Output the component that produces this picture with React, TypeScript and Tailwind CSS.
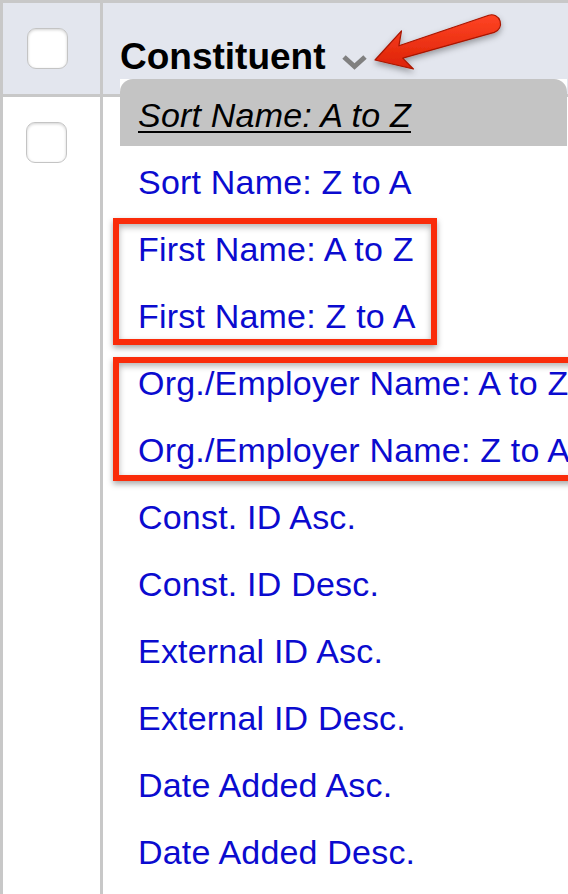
import React from "react";

const items = [
  "Sort Name: Z to A",
  "First Name: A to Z",
  "First Name: Z to A",
  "Org./Employer Name: A to Z",
  "Org./Employer Name: Z to A",
  "Const. ID Asc.",
  "Const. ID Desc.",
  "External ID Asc.",
  "External ID Desc.",
  "Date Added Asc.",
  "Date Added Desc.",
];

function Checkbox() {
  return (
    <div className="w-[41px] h-[41px] rounded-[9px] bg-white border-[1.5px] border-[#c4c4c4] shadow-[inset_0_1px_3px_rgba(0,0,0,0.18)]" />
  );
}

export default function App() {
  return (
    <div
      className="relative w-[568px] h-[894px] overflow-hidden bg-white"
      style={{ fontFamily: '"Liberation Sans", Arial, sans-serif' }}
    >
      <div className="flex flex-col h-full border-t-[3px] border-l-[3px] border-[#c8c8c8]">
        <div className="flex h-[94px] bg-[#e3e6ee] border-b-[3px] border-[#c8c8c8]">
          <div className="w-[100px] border-r-[3px] border-[#c8c8c8] flex items-center pl-[24px]">
            <Checkbox />
          </div>
          <div className="flex-1 flex items-start pl-[17px] pt-[34px]">
            <span className="text-[37px] leading-[40px] font-bold text-black">Constituent</span>
            <svg className="ml-[15px] mt-[17px]" width="27" height="16" viewBox="0 0 27 16">
              <path d="M3 3 L13.5 12.5 L24 3" fill="none" stroke="#808080" strokeWidth="5" strokeLinecap="butt" strokeLinejoin="miter" />
            </svg>
          </div>
        </div>
        <div className="flex flex-1">
          <div className="w-[100px] border-r-[3px] border-[#c8c8c8] pl-[23px] pt-[25px]">
            <Checkbox />
          </div>
          <div className="flex-1" />
        </div>
      </div>

      {/* dropdown menu */}
      <div className="absolute left-[120px] top-[79px] w-[447px] bg-white">
        <div className="h-[67px] bg-[#c4c4c4] rounded-t-[13px] pl-[18px] pt-[3px] leading-[67px] text-[34px] tracking-[0.2px] italic underline decoration-[2px] underline-offset-[4px] text-black whitespace-nowrap">
          Sort Name: A to Z
        </div>
        {items.map((t) => (
          <div
            key={t}
            className="h-[67px] pl-[18px] pt-[3px] leading-[67px] text-[34px] tracking-[0.2px] text-[#0b0bcf] whitespace-nowrap"
          >
            {t}
          </div>
        ))}
      </div>

      {/* annotation boxes */}
      <div className="absolute left-[113px] top-[218px] w-[324px] h-[127px] border-[6px] border-[#fa2c0a] shadow-[0_3px_6px_rgba(0,0,0,0.35),inset_0_3px_6px_rgba(0,0,0,0.3)]" />
      <div className="absolute left-[113px] top-[357px] w-[470px] h-[124px] border-[6px] border-[#fa2c0a] shadow-[0_3px_6px_rgba(0,0,0,0.35),inset_0_3px_6px_rgba(0,0,0,0.3)]" />

      {/* arrow */}
      <svg className="absolute left-0 top-0" width="568" height="120" viewBox="0 0 568 120">
        <defs>
          <linearGradient id="ag" x1="0" y1="0" x2="0" y2="1">
            <stop offset="0" stopColor="#ff4424" />
            <stop offset="1" stopColor="#dc2206" />
          </linearGradient>
          <filter id="sh" x="-20%" y="-50%" width="140%" height="200%">
            <feDropShadow dx="0" dy="3" stdDeviation="3" floodColor="#000" floodOpacity="0.35" />
          </filter>
        </defs>
        <path
          d="M375 60 L413.4 69 L402.7 58.2 L494.2 32.4 A9 9 0 0 0 488.8 15.2 L398.9 45.8 L401.5 30.8 Z"
          fill="url(#ag)"
          stroke="#a81603"
          strokeWidth="1.2"
          strokeLinejoin="round"
          filter="url(#sh)"
        />
      </svg>
    </div>
  );
}
